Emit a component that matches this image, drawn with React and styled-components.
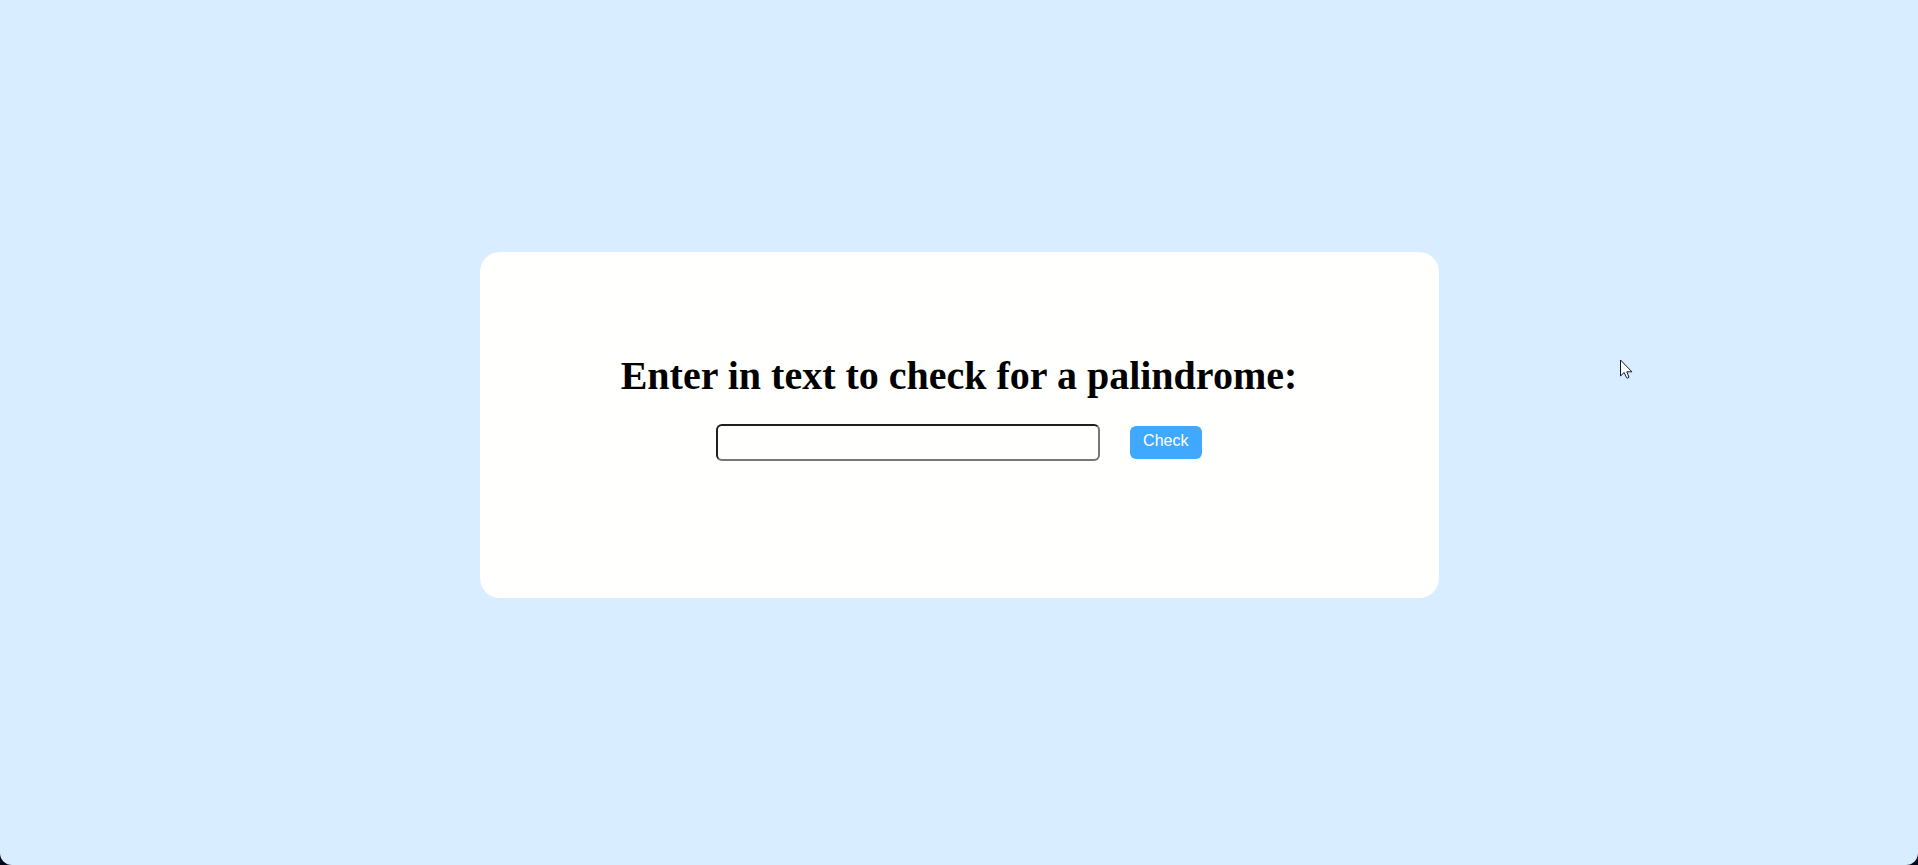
import React from "react";
import styled, { createGlobalStyle } from "styled-components";

const GlobalStyle = createGlobalStyle`
  body {
    margin: 0;
    background: #05071a;
  }
`;

const Page = styled.main`
  position: relative;
  box-sizing: border-box;
  min-height: 100vh;
  display: flex;
  flex-direction: column;
  align-items: center;
  justify-content: center;
  padding-bottom: 16px;
  background: #d8edff;
  border-radius: 0 0 12px 12px;
`;

const Card = styled.section`
  box-sizing: border-box;
  width: 50%;
  min-height: 40vh;
  padding: 101px 0 20px;
  background: #fffffd;
  border-radius: 20px;
  text-align: center;
`;

const Title = styled.h1`
  margin: 0;
  font: bold 40px/46px "Liberation Serif", "Times New Roman", serif;
  color: #000;
`;

const CheckForm = styled.form`
  display: flex;
  align-items: center;
  justify-content: center;
  gap: 30px;
  margin-top: 25px;
`;

const TextInput = styled.input`
  box-sizing: border-box;
  width: 40%;
  height: 37px;
  padding: 2px 8px;
  border: 2px solid;
  border-color: #1e1e1e #767676 #767676 #1e1e1e;
  border-radius: 6px;
  background: #fffffd;
  font: 16px "Liberation Sans", Arial, sans-serif;
`;

const CheckButton = styled.button`
  height: 33px;
  padding: 0 12px 2px;
  min-width: 72px;
  border: 0;
  border-radius: 6px;
  background: #40a9ff;
  color: #fff;
  font: 16px "Liberation Sans", Arial, sans-serif;
`;

const Pointer = styled.svg`
  position: absolute;
  left: 1620px;
  top: 359px;
`;

export default function App() {
  return (
    <>
      <GlobalStyle />
      <Page>
        <Card>
          <Title>
            <label htmlFor="text-input">Enter in text to check for a palindrome:</label>
          </Title>
          <CheckForm onSubmit={(e) => e.preventDefault()}>
            <TextInput id="text-input" type="text" />
            <CheckButton type="submit">Check</CheckButton>
          </CheckForm>
        </Card>
        <Pointer width="13" height="21" viewBox="0 0 13 21" aria-hidden="true">
          <path
            d="M.5 1v16l3.7-3.5 2.4 5.3q1 .8 2.4-.5l-2.2-5.5h5.1z"
            fill="#fff"
            stroke="#10182c"
          />
        </Pointer>
      </Page>
    </>
  );
}
